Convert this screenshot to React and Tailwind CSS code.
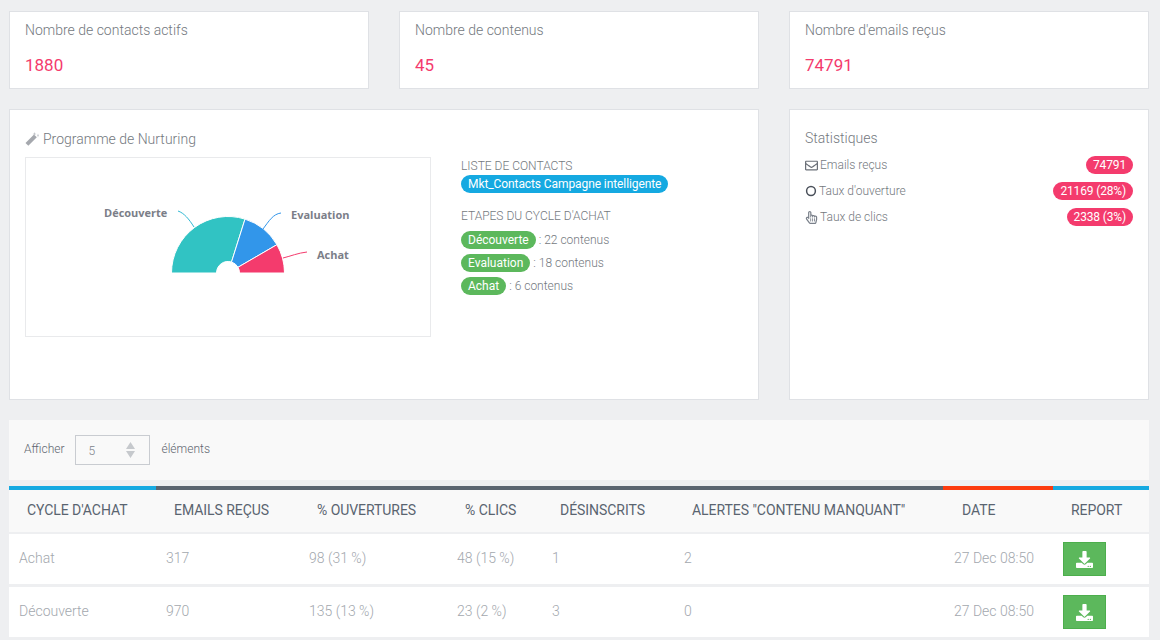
import React from "react";
import { FaDownload, FaRegEnvelope, FaRegHandPointer } from "react-icons/fa";

const counters = [
  { label: "Nombre de contacts actifs", value: "1880" },
  { label: "Nombre de contenus", value: "45" },
  { label: "Nombre d'emails reçus", value: "74791" },
];

const steps = [
  { name: "Découverte", count: "22 contenus" },
  { name: "Evaluation", count: "18 contenus" },
  { name: "Achat", count: "6 contenus" },
];

const columns = [
  { title: "CYCLE D'ACHAT", width: "w-[147px]" },
  { title: "EMAILS REÇUS", width: "w-[143px]" },
  { title: "% OUVERTURES", width: "w-[148px]" },
  { title: "% CLICS", width: "w-[95px]" },
  { title: "DÉSINSCRITS", width: "w-[132px]" },
  { title: 'ALERTES "CONTENU MANQUANT"', width: "w-[270px]" },
  { title: "DATE", width: "w-[109px]" },
  { title: "REPORT", width: "w-[96px]" },
];

const rows = [
  ["Achat", "317", "98 (31 %)", "48 (15 %)", "1", "2", "27 Dec 08:50"],
  ["Découverte", "970", "135 (13 %)", "23 (2 %)", "3", "0", "27 Dec 08:50"],
];

const NurturingChart = () => (
  <svg viewBox="0 0 404 178" className="w-[404px] h-[178px]">
    <g stroke="#ffffff" strokeWidth="1">
      <path d="M145.5 115 A56.5 56.5 0 0 1 219 61.1 L205.5 104 A11.5 11.5 0 0 0 190.5 115 Z" fill="#31c3c3" />
      <path d="M219 61.1 A56.5 56.5 0 0 1 250.9 86.7 L212 109.25 A11.5 11.5 0 0 0 205.5 104 Z" fill="#3296ea" />
      <path d="M250.9 86.7 A56.5 56.5 0 0 1 258.5 115 L213.5 115 A11.5 11.5 0 0 0 212 109.25 Z" fill="#f43b6d" />
    </g>
    <path d="M168 69 C163 61 158 55 152 53" fill="none" stroke="#31b9d4" />
    <path d="M237 71 C243 63 247 56 255 55" fill="none" stroke="#3296ea" />
    <path d="M257 100 C265 98 272 95 281 94" fill="none" stroke="#f43b6d" />
    <g fill="#7b7e88" fontSize="11" fontWeight="700" fontFamily="'Open Sans', sans-serif">
      <text x="78" y="59">Découverte</text>
      <text x="265" y="61">Evaluation</text>
      <text x="291" y="101">Achat</text>
    </g>
  </svg>
);

const WandIcon = () => (
  <svg width="14" height="14" viewBox="0 0 14 14" className="shrink-0">
    <path d="M0.5 11 L9 2.5 L11.8 5.3 L3.3 13.8 Z" fill="#a5a8ae" />
    <path d="M9.5 0 L10 1.5 L11.5 2 L10 2.5 L9.5 4 L9 2.5 L7.5 2 L9 1.5 Z M13 1.5 L13.5 3 L14 3.4 L13.5 3.8 L13 5.5 L12.5 3.8 L12 3.4 L12.5 3 Z" fill="#bfc2c7" />
  </svg>
);

const OpenIcon = () => (
  <svg width="12" height="12" viewBox="0 0 12 12" className="shrink-0">
    <circle cx="6" cy="6" r="4.4" fill="none" stroke="#4a505a" strokeWidth="1.5" />
  </svg>
);

const StatRow = ({ icon, label, value }) => (
  <div className="flex items-center justify-between h-[26px]">
    <div className="flex items-center gap-[2px] text-[12px] font-light text-[#747980]">
      {icon}
      <span>{label}</span>
    </div>
    <span className="bg-[#f43b6d] text-white text-[12px] tracking-[-0.15px] leading-[18px] px-[7px] rounded-full">{value}</span>
  </div>
);

export default function App() {
  return (
    <div className="w-[1160px] h-[640px] overflow-hidden bg-[#eeeff1] pt-[11px] pl-[9px] pr-[11px] font-['Roboto',sans-serif]">
      <div className="flex gap-[30px]">
        {counters.map((c) => (
          <div key={c.label} className="w-[360px] h-[78px] bg-white border border-[#dfe1e5] pl-[15px] pt-[9px]">
            <p className="text-[14px] leading-[18px] font-light text-[#747980]">{c.label}</p>
            <p className="mt-[15px] text-[17px] leading-[22px] text-[#f43b6d]">{c.value}</p>
          </div>
        ))}
      </div>

      <div className="flex gap-[30px] mt-[20px]">
        <div className="w-[750px] h-[291px] bg-white border border-[#dfe1e5] pl-[15px] pt-[20px]">
          <h3 className="flex items-center gap-[4px] text-[14px] leading-[18px] font-light text-[#747980]">
            <WandIcon />
            Programme de Nurturing
          </h3>
          <div className="flex mt-[9px]">
            <div className="w-[406px] h-[180px] border border-[#e9eaec]">
              <NurturingChart />
            </div>
            <div className="ml-[30px] pt-[1px] text-[12px] font-light text-[#747980]">
              <p className="leading-[16px]">LISTE DE CONTACTS</p>
              <span className="inline-block mt-[1px] bg-[#15a9e1] text-white font-normal tracking-[-0.09px] leading-[18px] px-[7px] rounded-full">
                Mkt_Contacts Campagne intelligente
              </span>
              <p className="mt-[15px] mb-[4px] leading-[16px]">ETAPES DU CYCLE D'ACHAT</p>
              {steps.map((s) => (
                <div key={s.name} className="flex items-center h-[23px]">
                  <span className="bg-[#5cb85c] text-white font-normal leading-[18px] px-[7px] rounded-full">{s.name}</span>
                  <span className="ml-[3px]">: {s.count}</span>
                </div>
              ))}
            </div>
          </div>
        </div>

        <div className="w-[360px] h-[291px] bg-white border border-[#dfe1e5] pl-[15px] pr-[15px] pt-[19px]">
          <h3 className="text-[14px] leading-[18px] font-light text-[#747980] mb-[5px]">Statistiques</h3>
          <StatRow icon={<FaRegEnvelope className="text-[13px] text-[#6b7078]" />} label="Emails reçus" value="74791" />
          <StatRow icon={<OpenIcon />} label="Taux d'ouverture" value="21169 (28%)" />
          <StatRow icon={<FaRegHandPointer className="text-[13px] text-[#7a808a]" />} label="Taux de clics" value="2338 (3%)" />
        </div>
      </div>

      <div className="mt-[20px] w-[1140px]">
        <div className="flex items-center h-[60px] bg-[#f9f9f9] pl-[15px] text-[12px] font-light text-[#5f6670]">
          <span className="mb-[2px]">Afficher</span>
          <div className="flex items-center justify-between w-[75px] h-[30px] ml-[11px] border border-[#c9ccd1] pl-[12px] pr-[14px] text-[#7d828a]">
            <span className="mt-[1px]">5</span>
            <svg width="9" height="16" viewBox="0 0 9 16" fill="#c6c9cd">
              <path d="M4.5 0 L9 7 L0 7 Z M0 9 L9 9 L4.5 16 Z" />
            </svg>
          </div>
          <span className="ml-[11px] mb-[2px]">éléments</span>
        </div>

        <div className="flex h-[4px] mt-[6px]">
          <div className="w-[147px] bg-[#15a9e1]" />
          <div className="w-[787px] bg-[#5a6470]" />
          <div className="w-[110px] bg-[#fb3a0e]" />
          <div className="w-[96px] bg-[#15a9e1]" />
        </div>

        <table className="table-fixed w-[1140px] border-separate border-spacing-0 text-left">
          <thead>
            <tr>
              {columns.map((col) => (
                <th
                  key={col.title}
                  className={`${col.width} h-[44px] pl-[18px] pb-[2px] bg-[#f9f9f9] border-b-2 border-[#eeeff1] text-[14px] tracking-[-0.05px] font-normal text-[#5a6470] whitespace-nowrap`}
                >
                  {col.title}
                </th>
              ))}
            </tr>
          </thead>
          <tbody>
            {rows.map((row) => (
              <tr key={row[0]} className="text-[14px] font-light text-[#a3a8ae]">
                {row.map((cell, i) => (
                  <td key={i} className="h-[53px] pl-[10px] pb-[1px] bg-white border-b-[3px] border-[#eeeff1] whitespace-nowrap">
                    {cell}
                  </td>
                ))}
                <td className="h-[53px] pl-[10px] bg-white border-b-[3px] border-[#eeeff1]">
                  <button className="flex items-center justify-center w-[43px] h-[34px] bg-[#5cb85c] border border-[#4cae4c] text-white">
                    <FaDownload className="text-[17px]" />
                  </button>
                </td>
              </tr>
            ))}
          </tbody>
        </table>
      </div>
    </div>
  );
}
